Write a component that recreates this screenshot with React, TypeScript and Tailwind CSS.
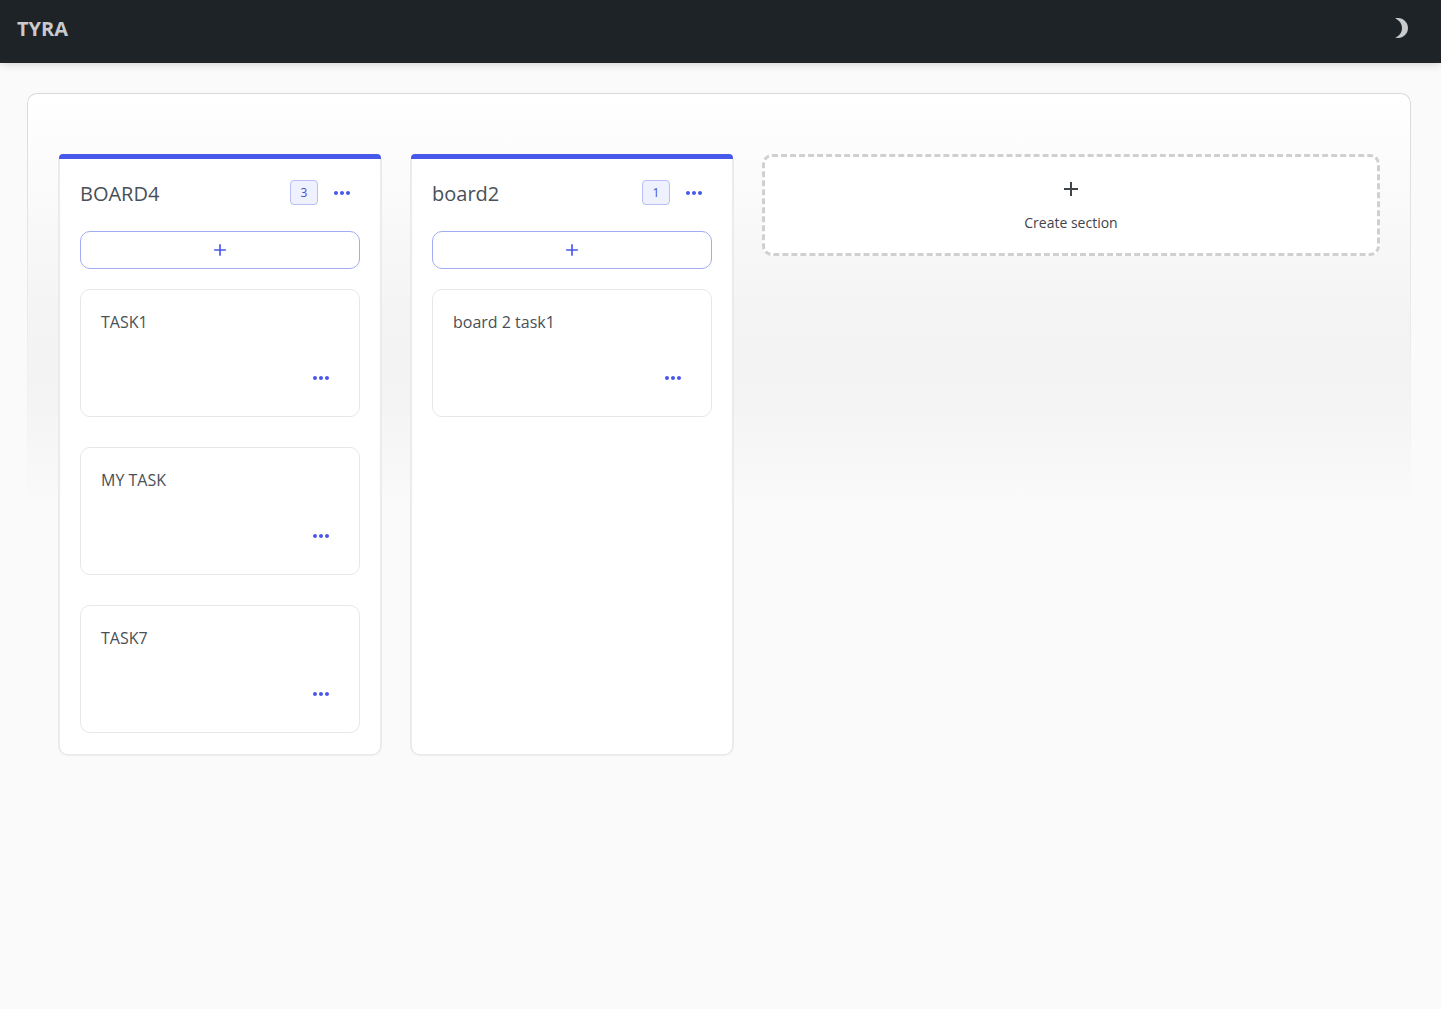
import { useState } from "react";
import { MdAdd, MdBrightness3, MdMoreHoriz } from "react-icons/md";

interface Task {
    id: number;
    title: string;
}

interface Board {
    id: number;
    title: string;
    tasks: Task[];
}

const initialBoards: Board[] = [
    {
        id: 1,
        title: "BOARD4",
        tasks: [
            { id: 1, title: "TASK1" },
            { id: 2, title: "MY TASK" },
            { id: 3, title: "TASK7" },
        ],
    },
    {
        id: 2,
        title: "board2",
        tasks: [{ id: 4, title: "board 2 task1" }],
    },
];

const Header = () => {
    return (
        <header className="flex h-[63px] items-start justify-between bg-[#1e2327] pr-7 pl-[17px] text-[#c9cacc] shadow-[0_2px_8px_rgba(0,0,0,0.15)]">
            <a href="#" className="mt-4 text-xl leading-[26px] font-bold">
                TYRA
            </a>
            <button type="button" aria-label="Toggle theme" className="mt-4">
                <MdBrightness3 size={24} />
            </button>
        </header>
    );
};

const TaskCard = ({ task }: { task: Task }) => {
    return (
        <li className="flex h-32 flex-col rounded-[10px] border border-[#e7e7e9] bg-white px-5 pt-5">
            <p className="text-base leading-6">{task.title}</p>
            <button
                type="button"
                aria-label={`${task.title} options`}
                className="mt-8 mr-1.5 self-end text-[#4858ec]"
            >
                <MdMoreHoriz size={24} />
            </button>
        </li>
    );
};

const BoardColumn = ({
    board,
    onAdd,
}: {
    board: Board;
    onAdd: (id: number) => void;
}) => {
    return (
        <section className="flex w-[324px] shrink-0 flex-col">
            <div className="mx-px h-[5px] rounded-t bg-[#4858ea]" />
            <div className="flex-1 rounded-b-[10px] border-x-2 border-b-2 border-[#ebebeb] bg-white px-5 pt-5 pb-[21px]">
                <div className="flex h-7 items-start">
                    <h2 className="flex-1 text-xl leading-[30px]">
                        {board.title}
                    </h2>
                    <span className="mt-px mr-3 flex h-[25px] w-7 items-center justify-center rounded border border-[#b9bff6] bg-[#eff1fe] text-xs text-[#4351cf]">
                        {board.tasks.length}
                    </span>
                    <button
                        type="button"
                        aria-label={`${board.title} options`}
                        className="mt-0.5 mr-1.5 text-[#4858ec]"
                    >
                        <MdMoreHoriz size={24} />
                    </button>
                </div>
                <button
                    type="button"
                    aria-label="Add task"
                    onClick={() => onAdd(board.id)}
                    className="mt-6 flex h-[38px] w-full items-center justify-center rounded-[10px] border border-[#a3abf4] text-[#4858ec]"
                >
                    <MdAdd size={20} />
                </button>
                <ul className="mt-5 flex flex-col gap-[30px]">
                    {board.tasks.map((task) => (
                        <TaskCard key={task.id} task={task} />
                    ))}
                </ul>
            </div>
        </section>
    );
};

const App = () => {
    const [boards, setBoards] = useState<Board[]>(initialBoards);

    const addTask = (boardId: number) => {
        setBoards(
            boards.map((board) =>
                board.id === boardId
                    ? {
                          ...board,
                          tasks: [
                              ...board.tasks,
                              { id: Date.now(), title: "New task" },
                          ],
                      }
                    : board,
            ),
        );
    };

    const addBoard = () => {
        setBoards([...boards, { id: Date.now(), title: "New", tasks: [] }]);
    };

    return (
        <div className="min-h-screen bg-[#fafafa] font-['Open_Sans','Noto_Sans',sans-serif] text-[#495057]">
            <Header />
            <main className="pt-[30px] pr-[30px] pl-[27px]">
                {/* outer gradient is the 1px border fading out */}
                <div className="rounded-t-[10px] bg-[linear-gradient(#d9d9d9,#fafafa_412px)] px-px pt-px">
                    <div className="flex items-start gap-7 rounded-t-[9px] bg-[linear-gradient(#ffffff,#f3f3f3_240px,#f3f3f3_290px,#fafafa_412px)] px-[30px] pt-[60px]">
                        <div className="flex items-stretch gap-7">
                            {boards.map((board) => (
                                <BoardColumn
                                    key={board.id}
                                    board={board}
                                    onAdd={addTask}
                                />
                            ))}
                        </div>
                        <button
                            type="button"
                            onClick={addBoard}
                            className="flex h-[102px] flex-1 flex-col items-center rounded-[10px] border-3 border-dashed border-[#d0d0d0] bg-white pt-5 text-[#3f454b]"
                        >
                            <MdAdd size={24} />
                            <span className="mt-3 text-sm leading-5">
                                Create section
                            </span>
                        </button>
                    </div>
                </div>
            </main>
        </div>
    );
};

export default App;
